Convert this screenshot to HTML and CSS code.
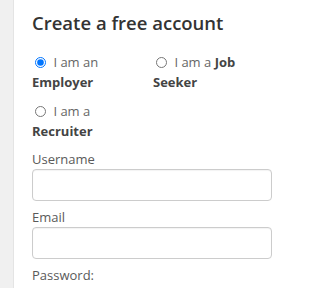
FILE: index.html
```html
<!DOCTYPE html>
<html>
<head>
<meta charset="utf-8">
<link rel="stylesheet" href="styles.css">
</head>
<body>
<div class="page">
  <div class="side"></div>
  <div class="panel">
    <h2 class="title">Create a free account</h2>
    <div class="roles">
      <label class="role"><input type="radio" name="role" checked> I am an <b>Employer</b></label>
      <label class="role"><input type="radio" name="role"> I am a <b>Job Seeker</b></label>
      <label class="role"><input type="radio" name="role"> I am a <b>Recruiter</b></label>
    </div>
    <div class="field">
      <label class="lbl">Username</label>
      <input class="inp" type="text">
    </div>
    <div class="field">
      <label class="lbl">Email</label>
      <input class="inp" type="text">
    </div>
    <div class="field">
      <label class="lbl">Password:</label>
    </div>
  </div>
</div>
</body>
</html>
```

FILE: styles.css
```css
html, body {
  margin: 0;
  padding: 0;
  background: #fff;
}
.page {
  display: flex;
  height: 288px;
  overflow: hidden;
  font-family: "Open Sans", sans-serif;
}
.side {
  width: 13px;
  flex: none;
  background: #f0f0f0;
  border-right: 1px solid #e4e4e4;
}
.panel {
  flex: 1;
  padding: 11px 0 0 18px;
}
.title {
  margin: 0;
  font-size: 18.5px;
  line-height: 24px;
  font-weight: 600;
  color: #333;
}
.roles {
  margin-top: 17px;
  display: grid;
  grid-template-columns: 121px 121px;
  row-gap: 9px;
}
.role {
  font-size: 13px;
  line-height: 20px;
  color: #666;
}
.role b {
  font-weight: 700;
  color: #444;
}
.role input {
  width: 11px;
  height: 11px;
  margin: 0 4px 0 3px;
  vertical-align: -1px;
}
.field {
  margin-top: 8px;
}
.field + .field {
  margin-top: 6px;
}
.lbl {
  display: block;
  font-size: 13px;
  line-height: 20px;
  color: #5a5a5a;
}
.inp {
  display: block;
  box-sizing: border-box;
  width: 240px;
  height: 32px;
  margin: 0;
  border: 1px solid #ccc;
  border-radius: 4px;
  box-shadow: inset 0 1px 1px rgba(0,0,0,0.05);
  background: #fff;
}
```
